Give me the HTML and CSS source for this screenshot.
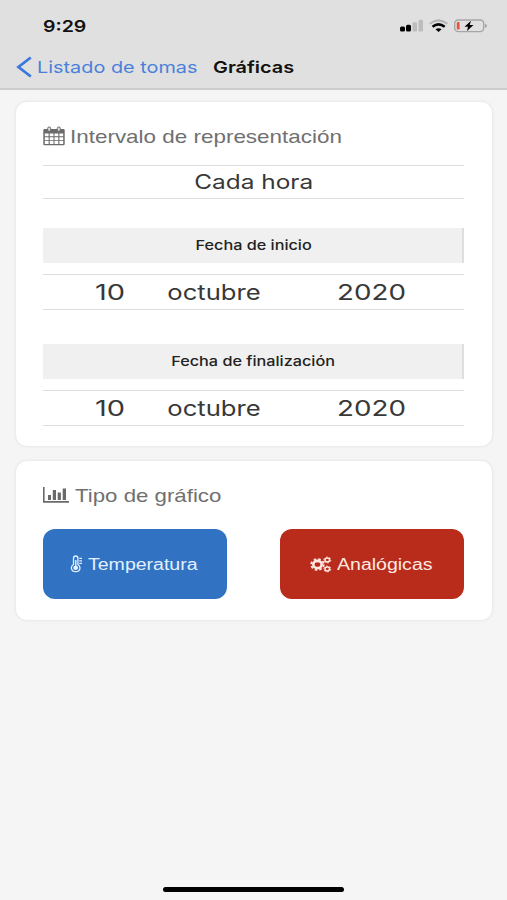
FILE: index.html
```html
<!DOCTYPE html>
<html lang="es">
<head>
<meta charset="utf-8">
<title>Gráficas</title>
<link rel="stylesheet" href="styles.css">
</head>
<body>
<div class="screen">
  <header class="top">
    <div class="status">
      <span class="wide time">9:29</span>
      <svg class="indicators" width="88" height="16" viewBox="0 0 88 16">
        <rect x="0" y="8.500" width="5" height="5" rx="1.500"/>
        <rect x="6" y="6.800" width="5" height="6.700" rx="1.500"/>
        <rect x="12.500" y="4.300" width="4.500" height="9.200" rx="1.300" fill="#bdbdbd"/>
        <rect x="18.500" y="1.800" width="4.500" height="11.700" rx="1.300" fill="#bdbdbd"/>
        <path d="M29.800 5.800Q38.500-1 47.300 5.800" fill="none" stroke="#b3b3b3" stroke-width="2"/>
        <path d="M32.500 8.800Q38.500 4 44.700 8.800" fill="none" stroke="#000" stroke-width="2.500"/>
        <path d="M35.500 11.200Q38.500 9.200 41.600 11.200L38.500 14z"/>
        <rect x="54.700" y="2" width="29" height="11.600" rx="3.500" fill="none" stroke="#a6a6a6" stroke-width="1.400"/>
        <path d="M85 5.500q4 2.300 0 4.600z" fill="#a6a6a6"/>
        <rect x="56.800" y="4" width="2.800" height="7.400" rx="1" fill="#e8503f"/>
        <path d="M71 2.800L64.500 8.700H68L67 13L73.500 7H69.700z" stroke="#e0e0e0" stroke-width="1" paint-order="stroke"/>
      </svg>
    </div>
    <nav class="nav">
      <svg class="chevron" width="17" height="22" viewBox="0 0 17 22"><path d="M14.800 1.500L2.500 11L14.800 20.500" fill="none" stroke="#3b78dd" stroke-width="2.800"/></svg>
      <a class="wide back">Listado de tomas</a>
      <h1 class="wide title">Gráficas</h1>
    </nav>
  </header>

  <main class="content">
    <section class="card interval">
      <h2 class="heading">
        <svg width="22" height="20" viewBox="0 0 22 20">
          <path fill="#6a6a6a" fill-rule="evenodd" d="M1.500 3H20.500Q21.700 3 21.700 4.200V18Q21.700 19.200 20.500 19.200H1.500Q.3 19.200 .3 18V4.200Q.3 3 1.500 3zM1.800 7.500V10.300H5.600V7.500zM6.700 7.500V10.300H10.500V7.500zM11.500 7.500V10.300H15.300V7.500zM16.400 7.500V10.300H20.200V7.500zM1.800 11.200V14.200H5.600V11.200zM6.700 11.200V14.200H10.500V11.200zM11.500 11.200V14.200H15.300V11.200zM16.400 11.200V14.200H20.200V11.200zM1.800 15.100V17.900H5.600V15.100zM6.700 15.100V17.900H10.500V15.100zM11.500 15.100V17.900H15.300V15.100zM16.400 15.100V17.900H20.200V15.100z"/>
          <g fill="#ddd" stroke="#6a6a6a"><rect x="4.700" y="1" width="3" height="4.300" rx="1.300"/><rect x="14.300" y="1" width="3" height="4.300" rx="1.300"/></g>
        </svg>
        <span class="wide heading-label">Intervalo de representación</span>
      </h2>
      <div class="picker single"><span class="wide">Cada hora</span></div>
      <div class="band first"><span class="wide">Fecha de inicio</span></div>
      <div class="picker date"><span class="wide day">10</span><span class="wide month">octubre</span><span class="wide year">2020</span></div>
      <div class="band second"><span class="wide">Fecha de finalización</span></div>
      <div class="picker date"><span class="wide day">10</span><span class="wide month">octubre</span><span class="wide year">2020</span></div>
    </section>

    <section class="card kind">
      <h2 class="heading">
        <svg width="27" height="20" viewBox="0 0 27 20">
          <path fill="#6a6a6a" d="M0 2H1.600V16H26V17.700H0zM5 10H8V15H5zM9.800 5H13V15H9.800zM14.700 7.500H17.900V15H14.700zM19.700 3.500H23V15H19.700z"/>
        </svg>
        <span class="wide heading-label kind-label">Tipo de gráfico</span>
      </h2>
      <div class="buttons">
        <button class="btn blue">
          <svg width="13" height="18" viewBox="0 0 13 18">
            <path d="M3.500 9.500V3.200Q3.500 1 5.700 1T7.900 3.200V9.500Q10 10.900 10 13Q9.700 16.700 5.700 16.700T1.300 13Q1.300 10.900 3.500 9.500z" fill="none" stroke="#e4f0ff" stroke-width="1.300"/>
            <path d="M5.100 5H6.500V10.800Q8.200 11.400 8.200 13T5.800 14.900T3.300 13T5.100 10.800zM9.300 2.700H12V3.900H9.300zM9.300 5.200H12V6.400H9.300zM9.300 7.700H12V8.900H9.300z" fill="#e4f0ff"/>
          </svg>
          <span class="wide btn-label">Temperatura</span>
        </button>
        <button class="btn red">
          <svg width="22" height="17" viewBox="0 0 22 17" fill="none" stroke="#ffe9e2">
            <ellipse cx="7.500" cy="8.500" rx="4.200" ry="3.600" stroke-width="2.600"/>
            <ellipse cx="7.500" cy="8.500" rx="6.300" ry="5.400" stroke-width="1.800" stroke-dasharray="2.500 2.110"/>
            <ellipse cx="17.300" cy="4" rx="2.300" ry="1.900" stroke-width="1.500"/>
            <ellipse cx="17.300" cy="4" rx="3.500" ry="2.900" stroke-width="1" stroke-dasharray="1.700 1.660"/>
            <ellipse cx="17.300" cy="13" rx="2.300" ry="1.900" stroke-width="1.500"/>
            <ellipse cx="17.300" cy="13" rx="3.500" ry="2.900" stroke-width="1" stroke-dasharray="1.700 1.660"/>
          </svg>
          <span class="wide btn-label">Analógicas</span>
        </button>
      </div>
    </section>
  </main>

  <footer class="home"><div class="home-bar"></div></footer>
</div>
</body>
</html>
```
FILE: styles.css
```css
* { box-sizing: border-box; }
body { margin: 0; background: #f5f5f5; font-family: Inter, "Liberation Sans", sans-serif; color: #111; }
.screen { width: 507px; height: 900px; display: flex; flex-direction: column; overflow: hidden; }
.wide { display: block; white-space: nowrap; transform: scaleX(1.22); transform-origin: left center; }

.top { height: 90px; background: #e0e0e0; border-bottom: 2px solid #cdcdcd; }
.status { height: 46px; padding: 18px 19px 0 43px; display: flex; justify-content: space-between; }
.time { font-size: 16px; line-height: 16px; font-weight: 600; }
.indicators { display: block; }
.nav { height: 42px; padding-left: 16px; display: flex; align-items: center; }
.chevron { margin-right: 4px; }
.back { width: 176px; font-size: 16.500px; line-height: 22px; color: #4a80db; transform: scaleX(1.203); }
.title { margin: 0; font-size: 16.500px; line-height: 22px; font-weight: 600; transform: scaleX(1.205); }

.content { flex: 1; padding: 11px 14px 0 15px; }
.card { background: #fff; border-radius: 12px; border: 1px solid #ececec; box-shadow: 0 0 2px #e6e6e6; padding: 0 28px 0 27px; }
.interval { height: 346px; padding-top: 24px; margin-bottom: 13px; }
.kind { height: 161px; padding-top: 24px; }
.heading { margin: 0; height: 20px; display: flex; align-items: center; font: 18.400px/20px "Liberation Sans", sans-serif; color: #707070; }
.heading svg { flex: none; }
.heading-label { margin-left: 5px; padding-top: 1px; }
.kind-label { transform: scaleX(1.21); }

.picker { border-top: 1px solid #dedede; border-bottom: 1px solid #dedede; font-size: 20px; line-height: 24px; color: #383838; }
.picker .wide { transform-origin: center; }
.single { height: 34px; margin-top: 19px; display: flex; align-items: center; justify-content: center; }
.band { height: 35px; background: #f0f0f0; border-right: 2px solid #dedede; padding-left: 2px; display: flex; align-items: center; justify-content: center; font-size: 13.300px; line-height: 17px; font-weight: 500; color: #222; }
.band .wide { transform-origin: center; }
.first { margin-top: 29px; }
.second { margin-top: 34px; }
.date { height: 36px; margin-top: 11px; padding: 2px 15px 0 43px; display: grid; grid-template-columns: 48px 160px 1fr; align-items: center; text-align: center; font-size: 21px; }
.date .day { transform: scaleX(1.38); }
.date .year { transform: scaleX(1.32); }

.buttons { margin-top: 24px; display: flex; justify-content: space-between; }
.btn { width: 184px; height: 70px; border: 0; border-radius: 12px; padding: 0; display: flex; align-items: center; color: #e4f0ff; font: 16px/20px "Liberation Sans", sans-serif; }
.btn svg { flex: none; }
.blue { background: #3173c2; padding-left: 27px; }
.red { background: #b92c1b; padding-left: 30px; color: #ffe9e2; }
.btn-label { margin-left: 5px; padding-top: 2px; }

.home { height: 13px; display: flex; justify-content: center; }
.home-bar { width: 181px; height: 5px; border-radius: 3px; background: #000; }
```
